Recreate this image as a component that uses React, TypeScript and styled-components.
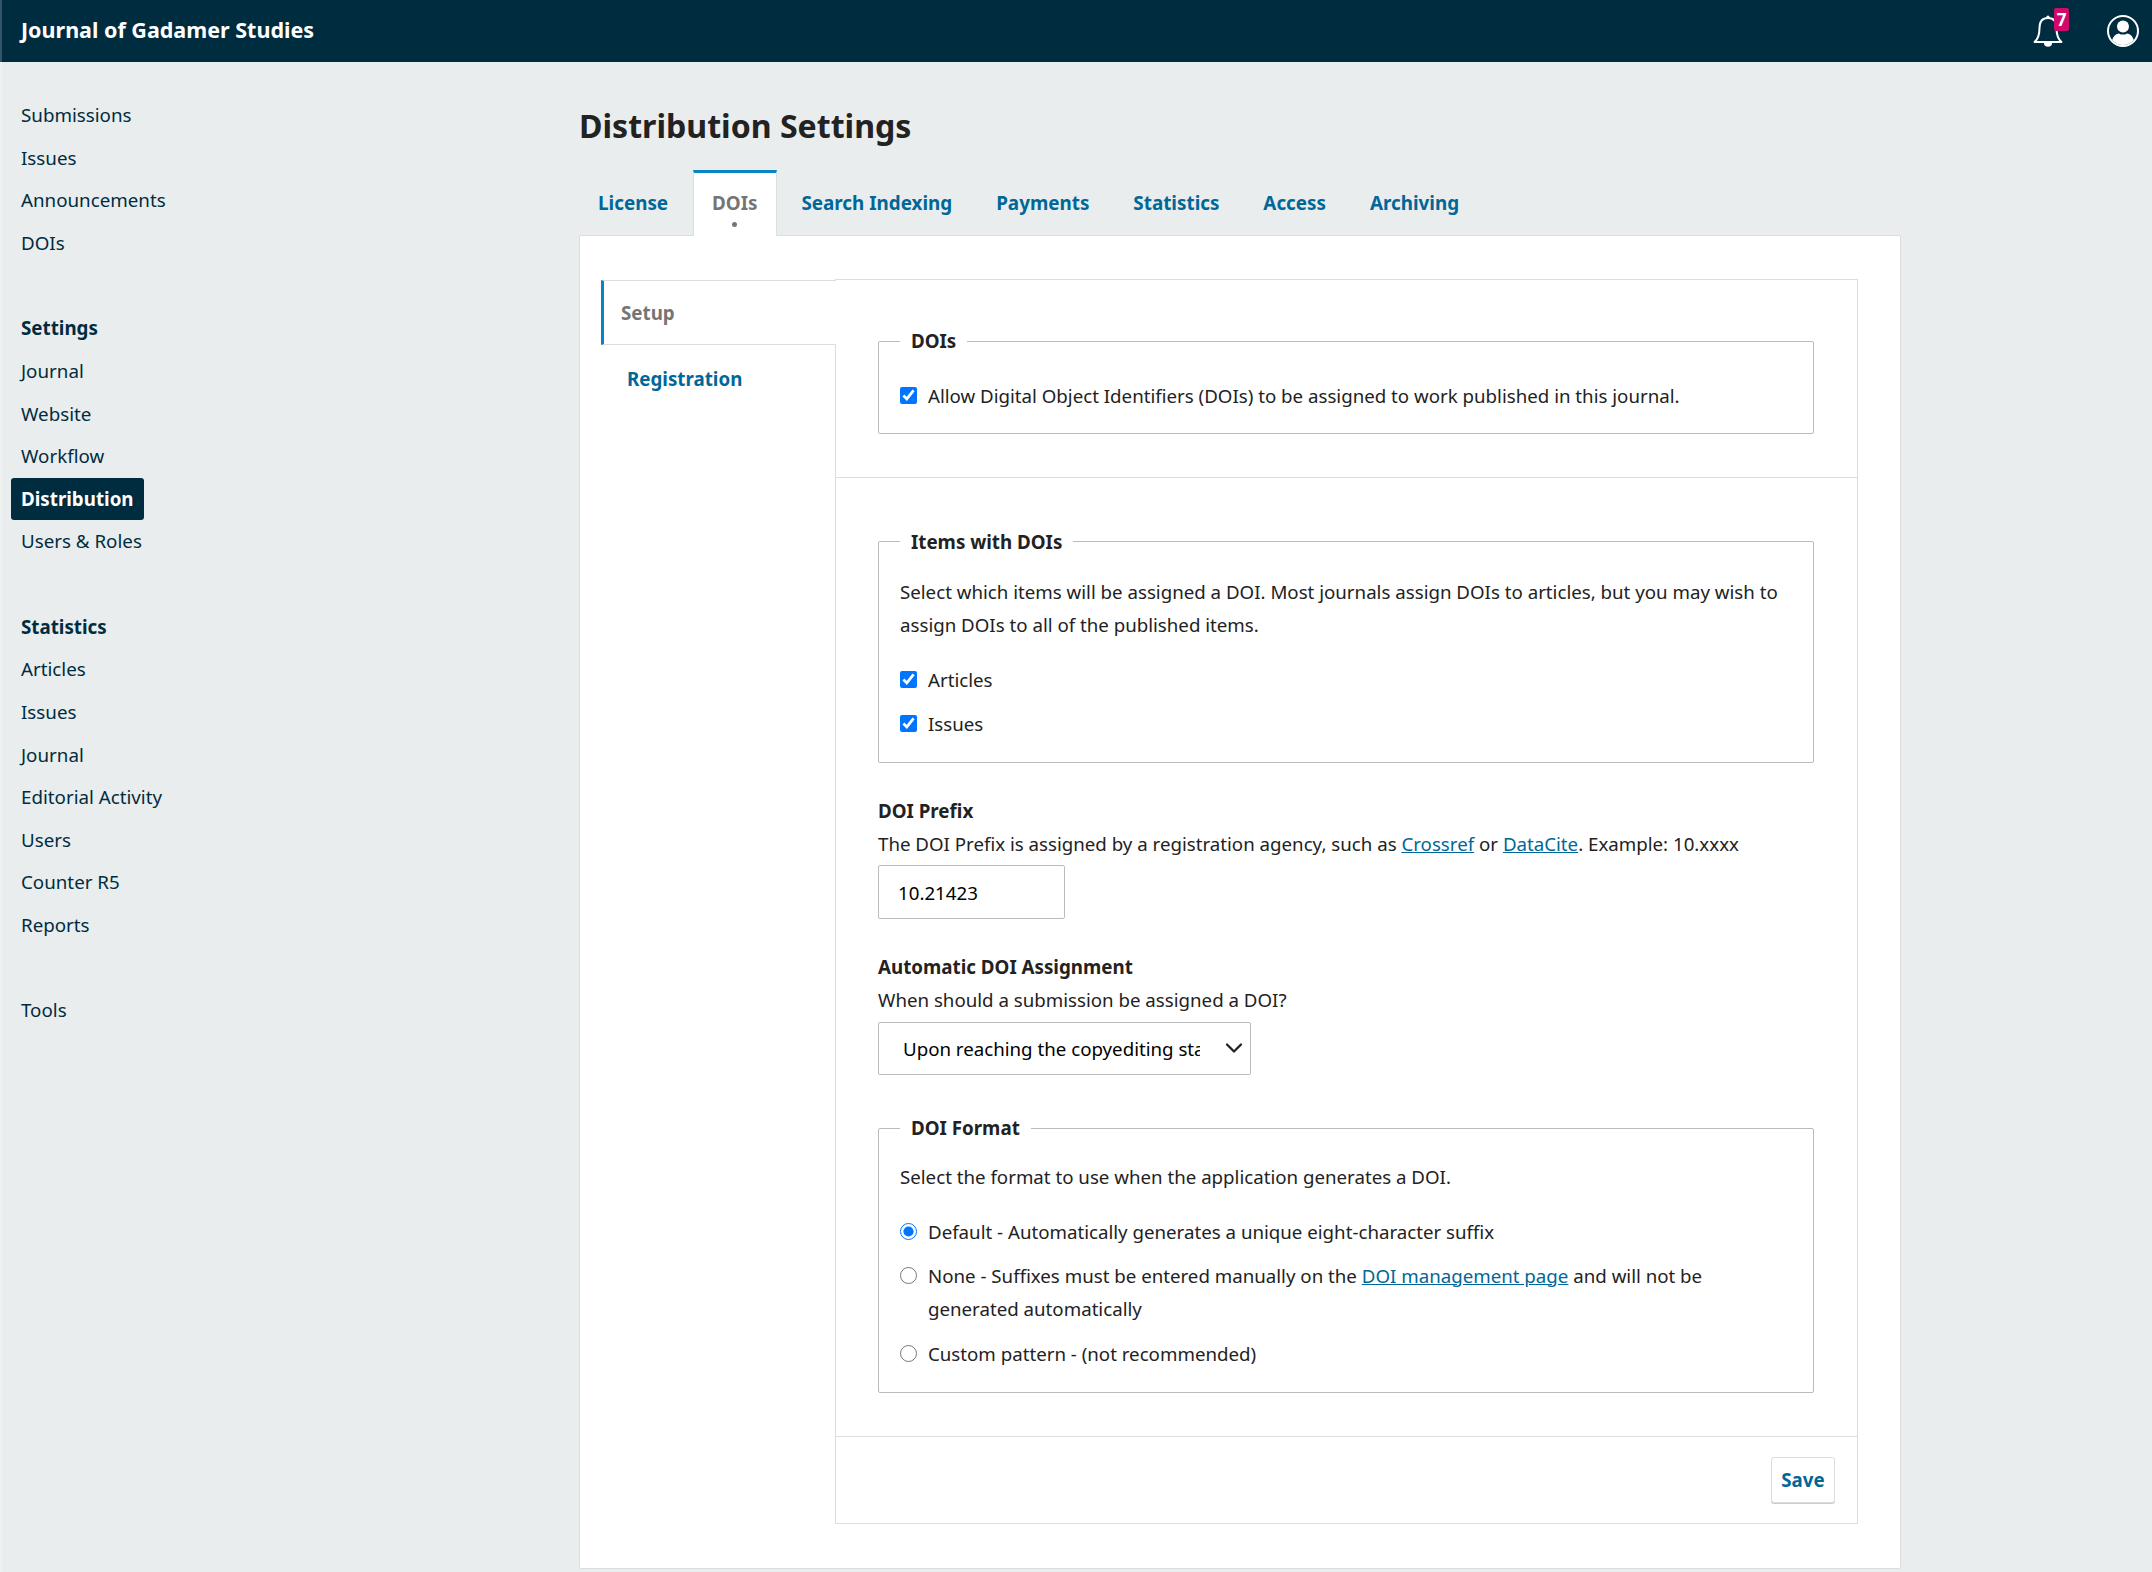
import styled, { createGlobalStyle } from "styled-components";
import { LuChevronDown } from "react-icons/lu";

const GlobalStyle = createGlobalStyle`
  html, body {
    margin: 0;
    background: #eaedee;
  }
  body {
    font-family: "Noto Sans", sans-serif;
    font-size: 18.7px;
    line-height: 33.6px;
    color: #222;
  }
  * {
    box-sizing: border-box;
  }
`;

const Page = styled.div`
  position: relative;
  height: 1572px;
  overflow: hidden;
  &::before {
    content: "";
    position: absolute;
    top: 0;
    bottom: 0;
    left: 0;
    width: 2px;
    background: rgba(255, 255, 255, 0.2);
  }
`;

const TopBar = styled.header`
  height: 62px;
  display: flex;
  align-items: center;
  justify-content: space-between;
  padding: 0 13px 0 21px;
  background: #002c40;
  color: #fff;
`;

const Brand = styled.div`
  margin-bottom: 2px;
  font-size: 21.5px;
  font-weight: 700;
`;

const TopActions = styled.div`
  display: flex;
  align-items: center;
  gap: 44px;
`;

const Bell = styled.div`
  position: relative;
  display: flex;
`;

const Badge = styled.span`
  position: absolute;
  top: -7px;
  right: -6px;
  width: 15px;
  height: 23px;
  border-radius: 2px;
  background: #d00a6c;
  font-size: 17px;
  font-weight: 700;
  line-height: 23px;
  text-align: center;
`;

const Body = styled.div`
  display: flex;
`;

const Sidebar = styled.nav`
  flex: 0 0 579px;
  padding: 32.3px 0 0 11px;
`;

const NavGroup = styled.ul`
  margin: 0 0 42.8px;
  padding: 0;
  list-style: none;
`;

const NavItem = styled.li<{ $active?: boolean; $heading?: boolean }>`
  width: fit-content;
  height: 42.6px;
  padding: 0 10.5px 0 10px;
  border-radius: 3px;
  font-size: 18.75px;
  line-height: 42.6px;
  color: ${(p) => (p.$active ? "#fff" : "#002c40")};
  background: ${(p) => (p.$active ? "#002c40" : "transparent")};
  font-weight: ${(p) => (p.$active || p.$heading ? 700 : 400)};
`;

const Main = styled.main`
  flex: 0 0 1322px;
  padding-top: 42px;
`;

const Title = styled.h1`
  margin: 0 0 22px;
  font-size: 32.1px;
  font-weight: 700;
  line-height: 44px;
`;

const Tabs = styled.div`
  display: flex;
  gap: 5.9px;
  position: relative;
  z-index: 1;
  margin-bottom: -1px;
`;

const Tab = styled.div<{ $active?: boolean }>`
  position: relative;
  height: 66px;
  padding: 0 18px;
  border: 1px solid ${(p) => (p.$active ? "#ddd" : "transparent")};
  border-top: 3px solid ${(p) => (p.$active ? "#0a84c4" : "transparent")};
  border-bottom: 0;
  background: ${(p) => (p.$active ? "#fff" : "transparent")};
  color: ${(p) => (p.$active ? "#757575" : "#006798")};
  font-size: 18.85px;
  font-weight: 700;
  line-height: 60px;
  ${(p) =>
    p.$active &&
    `&::after {
      content: "";
      position: absolute;
      left: 50%;
      bottom: 9px;
      width: 5px;
      height: 5px;
      margin-left: -2.5px;
      border-radius: 50%;
      background: #757575;
    }`}
`;

const Panel = styled.section`
  height: 1334px;
  display: flex;
  align-items: flex-start;
  padding: 43px 42px 0 21px;
  border: 1px solid #ddd;
  border-radius: 2px;
  background: #fff;
`;

const SideTabs = styled.div`
  flex: 0 0 235px;
  margin-right: -1px;
  padding-top: 1px;
  position: relative;
  z-index: 1;
`;

const SideTab = styled.div<{ $active?: boolean }>`
  height: ${(p) => (p.$active ? 65 : 67)}px;
  padding-left: ${(p) => (p.$active ? 17 : 23)}px;
  border-left: 3px solid ${(p) => (p.$active ? "#0a84c4" : "transparent")};
  border-top: ${(p) => (p.$active ? "1px solid #ddd" : "0")};
  border-bottom: ${(p) => (p.$active ? "1px solid #ddd" : "0")};
  background: ${(p) => (p.$active ? "#fff" : "transparent")};
  color: ${(p) => (p.$active ? "#757575" : "#006798")};
  font-size: 18.75px;
  font-weight: 700;
  line-height: ${(p) => (p.$active ? 63 : 67)}px;
`;

const FormBox = styled.div`
  flex: 1;
  border: 1px solid #ddd;
`;

const Section = styled.div<{ $top: number; $bottom: number }>`
  padding: ${(p) => p.$top}px 43px ${(p) => p.$bottom}px 42px;
  & + & {
    border-top: 1px solid #ddd;
  }
`;

const Group = styled.fieldset<{ $start?: number; $end?: number }>`
  margin: 0;
  padding: ${(p) => p.$start ?? 21}px 21px ${(p) => p.$end ?? 21}px;
  border: 1px solid #bbb;
  border-radius: 2px;
  min-width: 0;
`;

const GroupTitle = styled.legend`
  padding: 0 11px;
  font-size: 18.75px;
  font-weight: 700;
  line-height: 24px;
`;

const Help = styled.p`
  margin: 0;
`;

const Options = styled.div<{ $top: number }>`
  display: flex;
  flex-direction: column;
  gap: 10.5px;
  margin-top: ${(p) => p.$top}px;
`;

const Option = styled.label`
  display: flex;
  align-items: flex-start;
  gap: 11px;
`;

const Check = styled.input`
  flex: none;
  width: 17px;
  height: 17px;
  margin: 8px 0 0;
`;

const Field = styled.div<{ $top: number }>`
  margin-top: ${(p) => p.$top}px;
`;

const FieldLabel = styled.div`
  font-size: 18.75px;
  font-weight: 700;
  line-height: 32px;
`;

const FieldHelp = styled.div`
  line-height: 33.6px;
`;

const TextBox = styled.input`
  display: block;
  width: 187px;
  height: 54px;
  margin-top: 4px;
  padding: 1px 19px 0;
  border: 1px solid #bbb;
  border-radius: 2px;
  background: #fff;
  color: #000;
  font: inherit;
`;

const SelectWrap = styled.div`
  position: relative;
  width: 373px;
  margin-top: 6px;
`;

const Select = styled.select`
  display: block;
  width: 100%;
  height: 53px;
  padding: 0 50px 0 24px;
  border: 1px solid #bbb;
  border-radius: 2px;
  background: #fff;
  color: #000;
  font: inherit;
  appearance: none;
`;

const SelectArrow = styled.span`
  position: absolute;
  top: 12px;
  right: 3px;
  display: flex;
  width: 28px;
  font-size: 28px;
  color: #222;
  pointer-events: none;
`;

const FormatGroup = styled(Group)`
  margin-top: 41px;
`;

const Link = styled.a`
  color: #006798;
  text-decoration: underline;
`;

const Footer = styled.div`
  display: flex;
  justify-content: flex-end;
  height: 87px;
  padding: 20px 22px 0 0;
  border-top: 1px solid #ddd;
`;

const SaveButton = styled.button`
  width: 64px;
  height: 46px;
  padding: 0;
  border: 1px solid #ddd;
  border-radius: 3px;
  box-shadow: 0 1px 0 #ccc;
  background: #fff;
  color: #006798;
  font: inherit;
  font-weight: 700;
`;

const navGroups = [
  { items: ["Submissions", "Issues", "Announcements", "DOIs"] },
  { heading: "Settings", items: ["Journal", "Website", "Workflow", "Distribution", "Users & Roles"] },
  {
    heading: "Statistics",
    items: ["Articles", "Issues", "Journal", "Editorial Activity", "Users", "Counter R5", "Reports"],
  },
  { items: ["Tools"] },
];

const tabs = ["License", "DOIs", "Search Indexing", "Payments", "Statistics", "Access", "Archiving"];

function BellIcon() {
  return (
    <svg width="30" height="32" viewBox="0 0 30 32" fill="none">
      <path
        d="M15 3C9 3 6.5 7.5 6.5 13C6.5 21 4 25 1.5 27H28.5C26 25 23.5 21 23.5 13C23.5 7.5 21 3 15 3Z"
        stroke="#fff"
        strokeWidth="2"
        strokeLinejoin="round"
      />
      <circle cx="15" cy="2" r="1.6" fill="#fff" />
      <path d="M11 28a4 3.8 0 0 0 8 0Z" fill="#fff" />
    </svg>
  );
}

function UserIcon() {
  return (
    <svg width="32" height="32" viewBox="0 0 32 32">
      <circle cx="16" cy="16" r="15" fill="none" stroke="#fff" strokeWidth="2" />
      <circle cx="16" cy="11.5" r="6" fill="#fff" />
      <path
        d="M5.2 25C6.5 20.5 9.5 18.6 12 18.4C14 20 18 20 20 18.4C22.5 18.6 25.5 20.5 26.8 25A14 14 0 0 1 5.2 25Z"
        fill="#fff"
      />
    </svg>
  );
}

export default function App() {
  return (
    <Page>
      <GlobalStyle />
      <TopBar>
        <Brand>Journal of Gadamer Studies</Brand>
        <TopActions>
          <Bell>
            <BellIcon />
            <Badge>7</Badge>
          </Bell>
          <UserIcon />
        </TopActions>
      </TopBar>
      <Body>
        <Sidebar>
          {navGroups.map((group, i) => (
            <NavGroup key={i}>
              {group.heading && <NavItem $heading>{group.heading}</NavItem>}
              {group.items.map((item) => (
                <NavItem key={item} $active={item === "Distribution"}>
                  {item}
                </NavItem>
              ))}
            </NavGroup>
          ))}
        </Sidebar>
        <Main>
          <Title>Distribution Settings</Title>
          <Tabs>
            {tabs.map((tab) => (
              <Tab key={tab} $active={tab === "DOIs"}>
                {tab}
              </Tab>
            ))}
          </Tabs>
          <Panel>
            <SideTabs>
              <SideTab $active>Setup</SideTab>
              <SideTab>Registration</SideTab>
            </SideTabs>
            <FormBox>
              <Section $top={49} $bottom={43}>
                <Group $end={20}>
                  <GroupTitle>DOIs</GroupTitle>
                  <Options $top={5}>
                    <Option>
                      <Check type="checkbox" defaultChecked />
                      Allow Digital Object Identifiers (DOIs) to be assigned to work published in this journal.
                    </Option>
                  </Options>
                </Group>
              </Section>
              <Section $top={52} $bottom={43}>
                <Group>
                  <GroupTitle>Items with DOIs</GroupTitle>
                  <Help>
                    Select which items will be assigned a DOI. Most journals assign DOIs to articles, but you may wish
                    to assign DOIs to all of the published items.
                  </Help>
                  <Options $top={21.5}>
                    <Option>
                      <Check type="checkbox" defaultChecked />
                      Articles
                    </Option>
                    <Option>
                      <Check type="checkbox" defaultChecked />
                      Issues
                    </Option>
                  </Options>
                </Group>
                <Field $top={32}>
                  <FieldLabel>DOI Prefix</FieldLabel>
                  <FieldHelp>
                    The DOI Prefix is assigned by a registration agency, such as <Link href="#">Crossref</Link> or{" "}
                    <Link href="#">DataCite</Link>. Example: 10.xxxx
                  </FieldHelp>
                  <TextBox type="text" defaultValue="10.21423" />
                </Field>
                <Field $top={32}>
                  <FieldLabel>Automatic DOI Assignment</FieldLabel>
                  <FieldHelp>When should a submission be assigned a DOI?</FieldHelp>
                  <SelectWrap>
                    <Select defaultValue="copyediting">
                      <option value="copyediting">Upon reaching the copyediting stage</option>
                    </Select>
                    <SelectArrow>
                      <LuChevronDown />
                    </SelectArrow>
                  </SelectWrap>
                </Field>
                <FormatGroup $start={20} $end={22}>
                  <GroupTitle>DOI Format</GroupTitle>
                  <Help>Select the format to use when the application generates a DOI.</Help>
                  <Options $top={21}>
                    <Option>
                      <Check type="radio" name="format" defaultChecked />
                      Default - Automatically generates a unique eight-character suffix
                    </Option>
                    <Option>
                      <Check type="radio" name="format" />
                      <span>
                        None - Suffixes must be entered manually on the <Link href="#">DOI management page</Link> and
                        will not be generated automatically
                      </span>
                    </Option>
                    <Option>
                      <Check type="radio" name="format" />
                      Custom pattern - (not recommended)
                    </Option>
                  </Options>
                </FormatGroup>
              </Section>
              <Footer>
                <SaveButton>Save</SaveButton>
              </Footer>
            </FormBox>
          </Panel>
        </Main>
      </Body>
    </Page>
  );
}
